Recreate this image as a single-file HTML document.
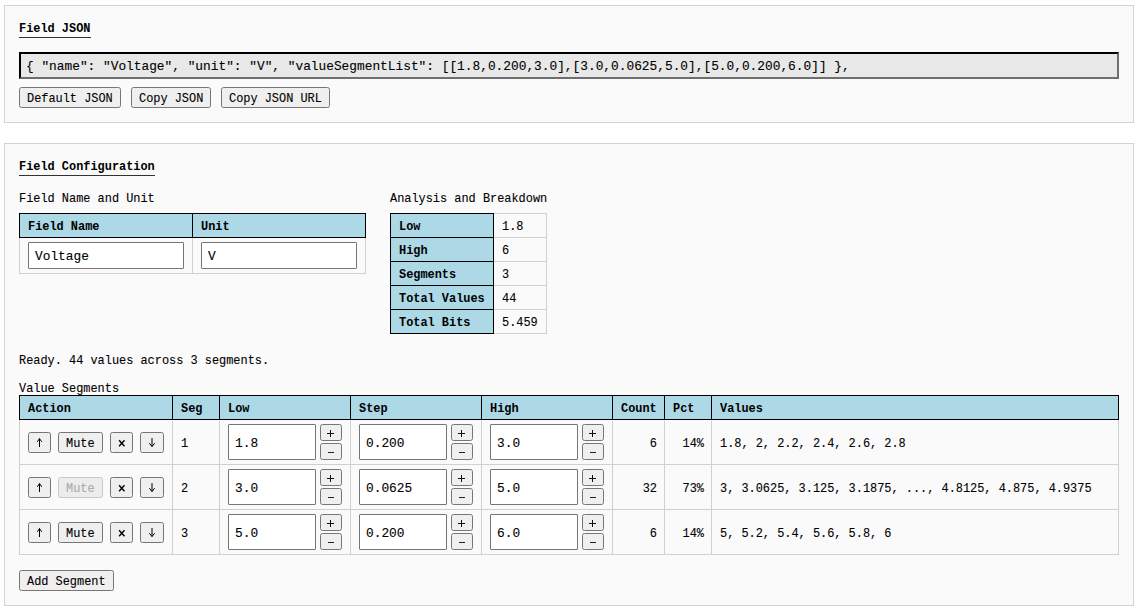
<!DOCTYPE html>
<html><head><meta charset="utf-8"><style>
html,body{margin:0;padding:0;background:#fff;width:1143px;height:611px;overflow:hidden;position:relative}
.b{position:absolute;box-sizing:border-box}
.t{position:absolute;font-family:'Liberation Mono', monospace;white-space:pre;color:#000;-webkit-text-stroke-width:0.1px}
</style></head><body>
<div class="b" style="left:4px;top:5px;width:1130px;height:118px;background:#fafafa;border:1px solid #d3d3d3;"></div>
<div class="t " style="top:22px;font-size:11.91px;line-height:15px;font-weight:bold;-webkit-text-stroke-width:0;left:19px;">Field JSON</div>
<div class="b" style="left:19px;top:37px;width:72px;height:1px;background:#333;"></div>
<div class="b" style="left:19px;top:52px;width:1100px;height:27px;background:#e8e8e8;border:2px solid;border-color:#000 #6e6e6e #6e6e6e #000;"></div>
<div class="t " style="top:59px;font-size:12.83px;line-height:16px;left:26px;">{ "name": "Voltage", "unit": "V", "valueSegmentList": [[1.8,0.200,3.0],[3.0,0.0625,5.0],[5.0,0.200,6.0]] },</div>
<div class="b" style="left:19px;top:87px;width:102px;height:21px;background:#efefef;border:1px solid #767676;border-radius:2.5px;"></div>
<div class="t " style="top:92px;font-size:11.91px;line-height:15px;left:27px;">Default JSON</div>
<div class="b" style="left:131px;top:87px;width:80px;height:21px;background:#efefef;border:1px solid #767676;border-radius:2.5px;"></div>
<div class="t " style="top:92px;font-size:11.91px;line-height:15px;left:139px;">Copy JSON</div>
<div class="b" style="left:221px;top:87px;width:109px;height:21px;background:#efefef;border:1px solid #767676;border-radius:2.5px;"></div>
<div class="t " style="top:92px;font-size:11.91px;line-height:15px;left:229px;">Copy JSON URL</div>
<div class="b" style="left:4px;top:143px;width:1130px;height:463px;background:#fafafa;border:1px solid #d3d3d3;"></div>
<div class="t " style="top:160px;font-size:11.91px;line-height:15px;font-weight:bold;-webkit-text-stroke-width:0;left:19px;">Field Configuration</div>
<div class="b" style="left:19px;top:175px;width:136px;height:1px;background:#333;"></div>
<div class="t " style="top:192px;font-size:11.91px;line-height:15px;left:19px;">Field Name and Unit</div>
<div class="t " style="top:192px;font-size:11.91px;line-height:15px;left:390px;">Analysis and Breakdown</div>
<div class="b" style="left:19px;top:237px;width:174px;height:37px;border:1px solid #d0d0d0;"></div>
<div class="b" style="left:192px;top:237px;width:174px;height:37px;border:1px solid #d0d0d0;"></div>
<div class="b" style="left:19px;top:213px;width:174px;height:25px;background:#add8e6;border:1px solid #000;"></div>
<div class="b" style="left:192px;top:213px;width:174px;height:25px;background:#add8e6;border:1px solid #000;"></div>
<div class="t " style="top:220px;font-size:11.91px;line-height:15px;font-weight:bold;-webkit-text-stroke-width:0;left:28px;">Field Name</div>
<div class="t " style="top:220px;font-size:11.91px;line-height:15px;font-weight:bold;-webkit-text-stroke-width:0;left:201px;">Unit</div>
<div class="b" style="left:28px;top:242px;width:156px;height:27px;background:#fff;border:1px solid #767676;border-radius:1px;"></div>
<div class="t " style="top:249px;font-size:12.83px;line-height:16px;left:35px;">Voltage</div>
<div class="b" style="left:201px;top:242px;width:156px;height:27px;background:#fff;border:1px solid #767676;border-radius:1px;"></div>
<div class="t " style="top:249px;font-size:12.83px;line-height:16px;left:208px;">V</div>
<div class="b" style="left:493px;top:213px;width:54px;height:25px;border:1px solid #d0d0d0;"></div>
<div class="b" style="left:493px;top:237px;width:54px;height:25px;border:1px solid #d0d0d0;"></div>
<div class="b" style="left:493px;top:261px;width:54px;height:25px;border:1px solid #d0d0d0;"></div>
<div class="b" style="left:493px;top:285px;width:54px;height:25px;border:1px solid #d0d0d0;"></div>
<div class="b" style="left:493px;top:309px;width:54px;height:25px;border:1px solid #d0d0d0;"></div>
<div class="b" style="left:390px;top:213px;width:104px;height:25px;background:#add8e6;border:1px solid #000;"></div>
<div class="t " style="top:220px;font-size:11.91px;line-height:15px;font-weight:bold;-webkit-text-stroke-width:0;left:399px;">Low</div>
<div class="t " style="top:220px;font-size:11.91px;line-height:15px;left:502px;">1.8</div>
<div class="b" style="left:390px;top:237px;width:104px;height:25px;background:#add8e6;border:1px solid #000;"></div>
<div class="t " style="top:244px;font-size:11.91px;line-height:15px;font-weight:bold;-webkit-text-stroke-width:0;left:399px;">High</div>
<div class="t " style="top:244px;font-size:11.91px;line-height:15px;left:502px;">6</div>
<div class="b" style="left:390px;top:261px;width:104px;height:25px;background:#add8e6;border:1px solid #000;"></div>
<div class="t " style="top:268px;font-size:11.91px;line-height:15px;font-weight:bold;-webkit-text-stroke-width:0;left:399px;">Segments</div>
<div class="t " style="top:268px;font-size:11.91px;line-height:15px;left:502px;">3</div>
<div class="b" style="left:390px;top:285px;width:104px;height:25px;background:#add8e6;border:1px solid #000;"></div>
<div class="t " style="top:292px;font-size:11.91px;line-height:15px;font-weight:bold;-webkit-text-stroke-width:0;left:399px;">Total Values</div>
<div class="t " style="top:292px;font-size:11.91px;line-height:15px;left:502px;">44</div>
<div class="b" style="left:390px;top:309px;width:104px;height:25px;background:#add8e6;border:1px solid #000;"></div>
<div class="t " style="top:316px;font-size:11.91px;line-height:15px;font-weight:bold;-webkit-text-stroke-width:0;left:399px;">Total Bits</div>
<div class="t " style="top:316px;font-size:11.91px;line-height:15px;left:502px;">5.459</div>
<div class="t " style="top:354px;font-size:11.91px;line-height:15px;left:19px;">Ready. 44 values across 3 segments.</div>
<div class="t " style="top:382px;font-size:11.91px;line-height:15px;left:19px;">Value Segments</div>
<div class="b" style="left:19px;top:419px;width:154px;height:46px;border:1px solid #d0d0d0;"></div>
<div class="b" style="left:172px;top:419px;width:48px;height:46px;border:1px solid #d0d0d0;"></div>
<div class="b" style="left:219px;top:419px;width:132px;height:46px;border:1px solid #d0d0d0;"></div>
<div class="b" style="left:350px;top:419px;width:132px;height:46px;border:1px solid #d0d0d0;"></div>
<div class="b" style="left:481px;top:419px;width:132px;height:46px;border:1px solid #d0d0d0;"></div>
<div class="b" style="left:612px;top:419px;width:53px;height:46px;border:1px solid #d0d0d0;"></div>
<div class="b" style="left:664px;top:419px;width:48px;height:46px;border:1px solid #d0d0d0;"></div>
<div class="b" style="left:711px;top:419px;width:408px;height:46px;border:1px solid #d0d0d0;"></div>
<div class="b" style="left:19px;top:464px;width:154px;height:46px;border:1px solid #d0d0d0;"></div>
<div class="b" style="left:172px;top:464px;width:48px;height:46px;border:1px solid #d0d0d0;"></div>
<div class="b" style="left:219px;top:464px;width:132px;height:46px;border:1px solid #d0d0d0;"></div>
<div class="b" style="left:350px;top:464px;width:132px;height:46px;border:1px solid #d0d0d0;"></div>
<div class="b" style="left:481px;top:464px;width:132px;height:46px;border:1px solid #d0d0d0;"></div>
<div class="b" style="left:612px;top:464px;width:53px;height:46px;border:1px solid #d0d0d0;"></div>
<div class="b" style="left:664px;top:464px;width:48px;height:46px;border:1px solid #d0d0d0;"></div>
<div class="b" style="left:711px;top:464px;width:408px;height:46px;border:1px solid #d0d0d0;"></div>
<div class="b" style="left:19px;top:509px;width:154px;height:46px;border:1px solid #d0d0d0;"></div>
<div class="b" style="left:172px;top:509px;width:48px;height:46px;border:1px solid #d0d0d0;"></div>
<div class="b" style="left:219px;top:509px;width:132px;height:46px;border:1px solid #d0d0d0;"></div>
<div class="b" style="left:350px;top:509px;width:132px;height:46px;border:1px solid #d0d0d0;"></div>
<div class="b" style="left:481px;top:509px;width:132px;height:46px;border:1px solid #d0d0d0;"></div>
<div class="b" style="left:612px;top:509px;width:53px;height:46px;border:1px solid #d0d0d0;"></div>
<div class="b" style="left:664px;top:509px;width:48px;height:46px;border:1px solid #d0d0d0;"></div>
<div class="b" style="left:711px;top:509px;width:408px;height:46px;border:1px solid #d0d0d0;"></div>
<div class="b" style="left:19px;top:395px;width:154px;height:25px;background:#add8e6;border:1px solid #000;"></div>
<div class="t " style="top:402px;font-size:11.91px;line-height:15px;font-weight:bold;-webkit-text-stroke-width:0;left:28px;">Action</div>
<div class="b" style="left:172px;top:395px;width:48px;height:25px;background:#add8e6;border:1px solid #000;"></div>
<div class="t " style="top:402px;font-size:11.91px;line-height:15px;font-weight:bold;-webkit-text-stroke-width:0;left:181px;">Seg</div>
<div class="b" style="left:219px;top:395px;width:132px;height:25px;background:#add8e6;border:1px solid #000;"></div>
<div class="t " style="top:402px;font-size:11.91px;line-height:15px;font-weight:bold;-webkit-text-stroke-width:0;left:228px;">Low</div>
<div class="b" style="left:350px;top:395px;width:132px;height:25px;background:#add8e6;border:1px solid #000;"></div>
<div class="t " style="top:402px;font-size:11.91px;line-height:15px;font-weight:bold;-webkit-text-stroke-width:0;left:359px;">Step</div>
<div class="b" style="left:481px;top:395px;width:132px;height:25px;background:#add8e6;border:1px solid #000;"></div>
<div class="t " style="top:402px;font-size:11.91px;line-height:15px;font-weight:bold;-webkit-text-stroke-width:0;left:490px;">High</div>
<div class="b" style="left:612px;top:395px;width:53px;height:25px;background:#add8e6;border:1px solid #000;"></div>
<div class="t " style="top:402px;font-size:11.91px;line-height:15px;font-weight:bold;-webkit-text-stroke-width:0;left:621px;">Count</div>
<div class="b" style="left:664px;top:395px;width:48px;height:25px;background:#add8e6;border:1px solid #000;"></div>
<div class="t " style="top:402px;font-size:11.91px;line-height:15px;font-weight:bold;-webkit-text-stroke-width:0;left:673px;">Pct</div>
<div class="b" style="left:711px;top:395px;width:408px;height:25px;background:#add8e6;border:1px solid #000;"></div>
<div class="t " style="top:402px;font-size:11.91px;line-height:15px;font-weight:bold;-webkit-text-stroke-width:0;left:720px;">Values</div>
<div class="b" style="left:28px;top:432px;width:23px;height:21px;background:#efefef;border:1px solid #767676;border-radius:2.5px;"></div>
<div class="b" style="left:58px;top:432px;width:45px;height:21px;background:#efefef;border:1px solid #767676;border-radius:2.5px;"></div>
<div class="t " style="top:437px;font-size:11.91px;line-height:15px;left:66px;">Mute</div>
<div class="b" style="left:110px;top:432px;width:23px;height:21px;background:#efefef;border:1px solid #767676;border-radius:2.5px;"></div>
<div class="b" style="left:140px;top:432px;width:24px;height:21px;background:#efefef;border:1px solid #767676;border-radius:2.5px;"></div>
<div class="t " style="top:437px;font-size:11.91px;line-height:15px;left:181px;">1</div>
<div class="b" style="left:228px;top:424px;width:88px;height:36px;background:#fff;border:1px solid #767676;border-radius:1px;"></div>
<div class="t " style="top:436px;font-size:12.83px;line-height:16px;left:235px;">1.8</div>
<div class="b" style="left:320px;top:424px;width:22px;height:17px;background:#efefef;border:1px solid #767676;border-radius:2.5px;"></div>
<div class="b" style="left:330px;top:430px;width:1px;height:7px;background:#111;"></div>
<div class="b" style="left:327px;top:433px;width:7px;height:1px;background:#111;"></div>
<div class="b" style="left:320px;top:443px;width:22px;height:17px;background:#efefef;border:1px solid #767676;border-radius:2.5px;"></div>
<div class="b" style="left:328px;top:452px;width:6px;height:1px;background:#222;"></div>
<div class="b" style="left:359px;top:424px;width:88px;height:36px;background:#fff;border:1px solid #767676;border-radius:1px;"></div>
<div class="t " style="top:436px;font-size:12.83px;line-height:16px;left:366px;">0.200</div>
<div class="b" style="left:451px;top:424px;width:22px;height:17px;background:#efefef;border:1px solid #767676;border-radius:2.5px;"></div>
<div class="b" style="left:461px;top:430px;width:1px;height:7px;background:#111;"></div>
<div class="b" style="left:458px;top:433px;width:7px;height:1px;background:#111;"></div>
<div class="b" style="left:451px;top:443px;width:22px;height:17px;background:#efefef;border:1px solid #767676;border-radius:2.5px;"></div>
<div class="b" style="left:459px;top:452px;width:6px;height:1px;background:#222;"></div>
<div class="b" style="left:490px;top:424px;width:88px;height:36px;background:#fff;border:1px solid #767676;border-radius:1px;"></div>
<div class="t " style="top:436px;font-size:12.83px;line-height:16px;left:497px;">3.0</div>
<div class="b" style="left:582px;top:424px;width:22px;height:17px;background:#efefef;border:1px solid #767676;border-radius:2.5px;"></div>
<div class="b" style="left:592px;top:430px;width:1px;height:7px;background:#111;"></div>
<div class="b" style="left:589px;top:433px;width:7px;height:1px;background:#111;"></div>
<div class="b" style="left:582px;top:443px;width:22px;height:17px;background:#efefef;border:1px solid #767676;border-radius:2.5px;"></div>
<div class="b" style="left:590px;top:452px;width:6px;height:1px;background:#222;"></div>
<div class="t " style="top:437px;font-size:11.91px;line-height:15px;right:486px;text-align:right;">6</div>
<div class="t " style="top:437px;font-size:11.91px;line-height:15px;right:439px;text-align:right;">14%</div>
<div class="t " style="top:437px;font-size:11.91px;line-height:15px;left:720px;">1.8, 2, 2.2, 2.4, 2.6, 2.8</div>
<div class="b" style="left:28px;top:477px;width:23px;height:21px;background:#efefef;border:1px solid #767676;border-radius:2.5px;"></div>
<div class="b" style="left:58px;top:477px;width:45px;height:21px;background:#ececec;border:1px solid #c9c9c9;border-radius:2.5px;"></div>
<div class="t " style="top:482px;font-size:11.91px;line-height:15px;color:#aaaaaa;left:66px;">Mute</div>
<div class="b" style="left:110px;top:477px;width:23px;height:21px;background:#efefef;border:1px solid #767676;border-radius:2.5px;"></div>
<div class="b" style="left:140px;top:477px;width:24px;height:21px;background:#efefef;border:1px solid #767676;border-radius:2.5px;"></div>
<div class="t " style="top:482px;font-size:11.91px;line-height:15px;left:181px;">2</div>
<div class="b" style="left:228px;top:469px;width:88px;height:36px;background:#fff;border:1px solid #767676;border-radius:1px;"></div>
<div class="t " style="top:481px;font-size:12.83px;line-height:16px;left:235px;">3.0</div>
<div class="b" style="left:320px;top:469px;width:22px;height:17px;background:#efefef;border:1px solid #767676;border-radius:2.5px;"></div>
<div class="b" style="left:330px;top:475px;width:1px;height:7px;background:#111;"></div>
<div class="b" style="left:327px;top:478px;width:7px;height:1px;background:#111;"></div>
<div class="b" style="left:320px;top:488px;width:22px;height:17px;background:#efefef;border:1px solid #767676;border-radius:2.5px;"></div>
<div class="b" style="left:328px;top:497px;width:6px;height:1px;background:#222;"></div>
<div class="b" style="left:359px;top:469px;width:88px;height:36px;background:#fff;border:1px solid #767676;border-radius:1px;"></div>
<div class="t " style="top:481px;font-size:12.83px;line-height:16px;left:366px;">0.0625</div>
<div class="b" style="left:451px;top:469px;width:22px;height:17px;background:#efefef;border:1px solid #767676;border-radius:2.5px;"></div>
<div class="b" style="left:461px;top:475px;width:1px;height:7px;background:#111;"></div>
<div class="b" style="left:458px;top:478px;width:7px;height:1px;background:#111;"></div>
<div class="b" style="left:451px;top:488px;width:22px;height:17px;background:#efefef;border:1px solid #767676;border-radius:2.5px;"></div>
<div class="b" style="left:459px;top:497px;width:6px;height:1px;background:#222;"></div>
<div class="b" style="left:490px;top:469px;width:88px;height:36px;background:#fff;border:1px solid #767676;border-radius:1px;"></div>
<div class="t " style="top:481px;font-size:12.83px;line-height:16px;left:497px;">5.0</div>
<div class="b" style="left:582px;top:469px;width:22px;height:17px;background:#efefef;border:1px solid #767676;border-radius:2.5px;"></div>
<div class="b" style="left:592px;top:475px;width:1px;height:7px;background:#111;"></div>
<div class="b" style="left:589px;top:478px;width:7px;height:1px;background:#111;"></div>
<div class="b" style="left:582px;top:488px;width:22px;height:17px;background:#efefef;border:1px solid #767676;border-radius:2.5px;"></div>
<div class="b" style="left:590px;top:497px;width:6px;height:1px;background:#222;"></div>
<div class="t " style="top:482px;font-size:11.91px;line-height:15px;right:486px;text-align:right;">32</div>
<div class="t " style="top:482px;font-size:11.91px;line-height:15px;right:439px;text-align:right;">73%</div>
<div class="t " style="top:482px;font-size:11.91px;line-height:15px;left:720px;">3, 3.0625, 3.125, 3.1875, ..., 4.8125, 4.875, 4.9375</div>
<div class="b" style="left:28px;top:522px;width:23px;height:21px;background:#efefef;border:1px solid #767676;border-radius:2.5px;"></div>
<div class="b" style="left:58px;top:522px;width:45px;height:21px;background:#efefef;border:1px solid #767676;border-radius:2.5px;"></div>
<div class="t " style="top:527px;font-size:11.91px;line-height:15px;left:66px;">Mute</div>
<div class="b" style="left:110px;top:522px;width:23px;height:21px;background:#efefef;border:1px solid #767676;border-radius:2.5px;"></div>
<div class="b" style="left:140px;top:522px;width:24px;height:21px;background:#efefef;border:1px solid #767676;border-radius:2.5px;"></div>
<div class="t " style="top:527px;font-size:11.91px;line-height:15px;left:181px;">3</div>
<div class="b" style="left:228px;top:514px;width:88px;height:36px;background:#fff;border:1px solid #767676;border-radius:1px;"></div>
<div class="t " style="top:526px;font-size:12.83px;line-height:16px;left:235px;">5.0</div>
<div class="b" style="left:320px;top:514px;width:22px;height:17px;background:#efefef;border:1px solid #767676;border-radius:2.5px;"></div>
<div class="b" style="left:330px;top:520px;width:1px;height:7px;background:#111;"></div>
<div class="b" style="left:327px;top:523px;width:7px;height:1px;background:#111;"></div>
<div class="b" style="left:320px;top:533px;width:22px;height:17px;background:#efefef;border:1px solid #767676;border-radius:2.5px;"></div>
<div class="b" style="left:328px;top:542px;width:6px;height:1px;background:#222;"></div>
<div class="b" style="left:359px;top:514px;width:88px;height:36px;background:#fff;border:1px solid #767676;border-radius:1px;"></div>
<div class="t " style="top:526px;font-size:12.83px;line-height:16px;left:366px;">0.200</div>
<div class="b" style="left:451px;top:514px;width:22px;height:17px;background:#efefef;border:1px solid #767676;border-radius:2.5px;"></div>
<div class="b" style="left:461px;top:520px;width:1px;height:7px;background:#111;"></div>
<div class="b" style="left:458px;top:523px;width:7px;height:1px;background:#111;"></div>
<div class="b" style="left:451px;top:533px;width:22px;height:17px;background:#efefef;border:1px solid #767676;border-radius:2.5px;"></div>
<div class="b" style="left:459px;top:542px;width:6px;height:1px;background:#222;"></div>
<div class="b" style="left:490px;top:514px;width:88px;height:36px;background:#fff;border:1px solid #767676;border-radius:1px;"></div>
<div class="t " style="top:526px;font-size:12.83px;line-height:16px;left:497px;">6.0</div>
<div class="b" style="left:582px;top:514px;width:22px;height:17px;background:#efefef;border:1px solid #767676;border-radius:2.5px;"></div>
<div class="b" style="left:592px;top:520px;width:1px;height:7px;background:#111;"></div>
<div class="b" style="left:589px;top:523px;width:7px;height:1px;background:#111;"></div>
<div class="b" style="left:582px;top:533px;width:22px;height:17px;background:#efefef;border:1px solid #767676;border-radius:2.5px;"></div>
<div class="b" style="left:590px;top:542px;width:6px;height:1px;background:#222;"></div>
<div class="t " style="top:527px;font-size:11.91px;line-height:15px;right:486px;text-align:right;">6</div>
<div class="t " style="top:527px;font-size:11.91px;line-height:15px;right:439px;text-align:right;">14%</div>
<div class="t " style="top:527px;font-size:11.91px;line-height:15px;left:720px;">5, 5.2, 5.4, 5.6, 5.8, 6</div>
<div class="b" style="left:19px;top:570px;width:95px;height:21px;background:#efefef;border:1px solid #767676;border-radius:2.5px;"></div>
<div class="t " style="top:575px;font-size:11.91px;line-height:15px;left:27px;">Add Segment</div>
<svg style="position:absolute;left:0;top:0" width="1143" height="611" fill="none" stroke="#000" stroke-width="1"><path d="M39.5 438.5V447 M37.3 441.8L39.5 438.6L41.7 441.8"/><path stroke-width="1.4" d="M119.1 440.2L124.5 446.2M124.5 440.2L119.1 446.2"/><path d="M152 438V446.5 M149.4 443.2L152 446.6L154.6 443.2"/><path d="M39.5 483.5V492 M37.3 486.8L39.5 483.6L41.7 486.8"/><path stroke-width="1.4" d="M119.1 485.2L124.5 491.2M124.5 485.2L119.1 491.2"/><path d="M152 483V491.5 M149.4 488.2L152 491.6L154.6 488.2"/><path d="M39.5 528.5V537 M37.3 531.8L39.5 528.6L41.7 531.8"/><path stroke-width="1.4" d="M119.1 530.2L124.5 536.2M124.5 530.2L119.1 536.2"/><path d="M152 528V536.5 M149.4 533.2L152 536.6L154.6 533.2"/></svg>
</body></html>
